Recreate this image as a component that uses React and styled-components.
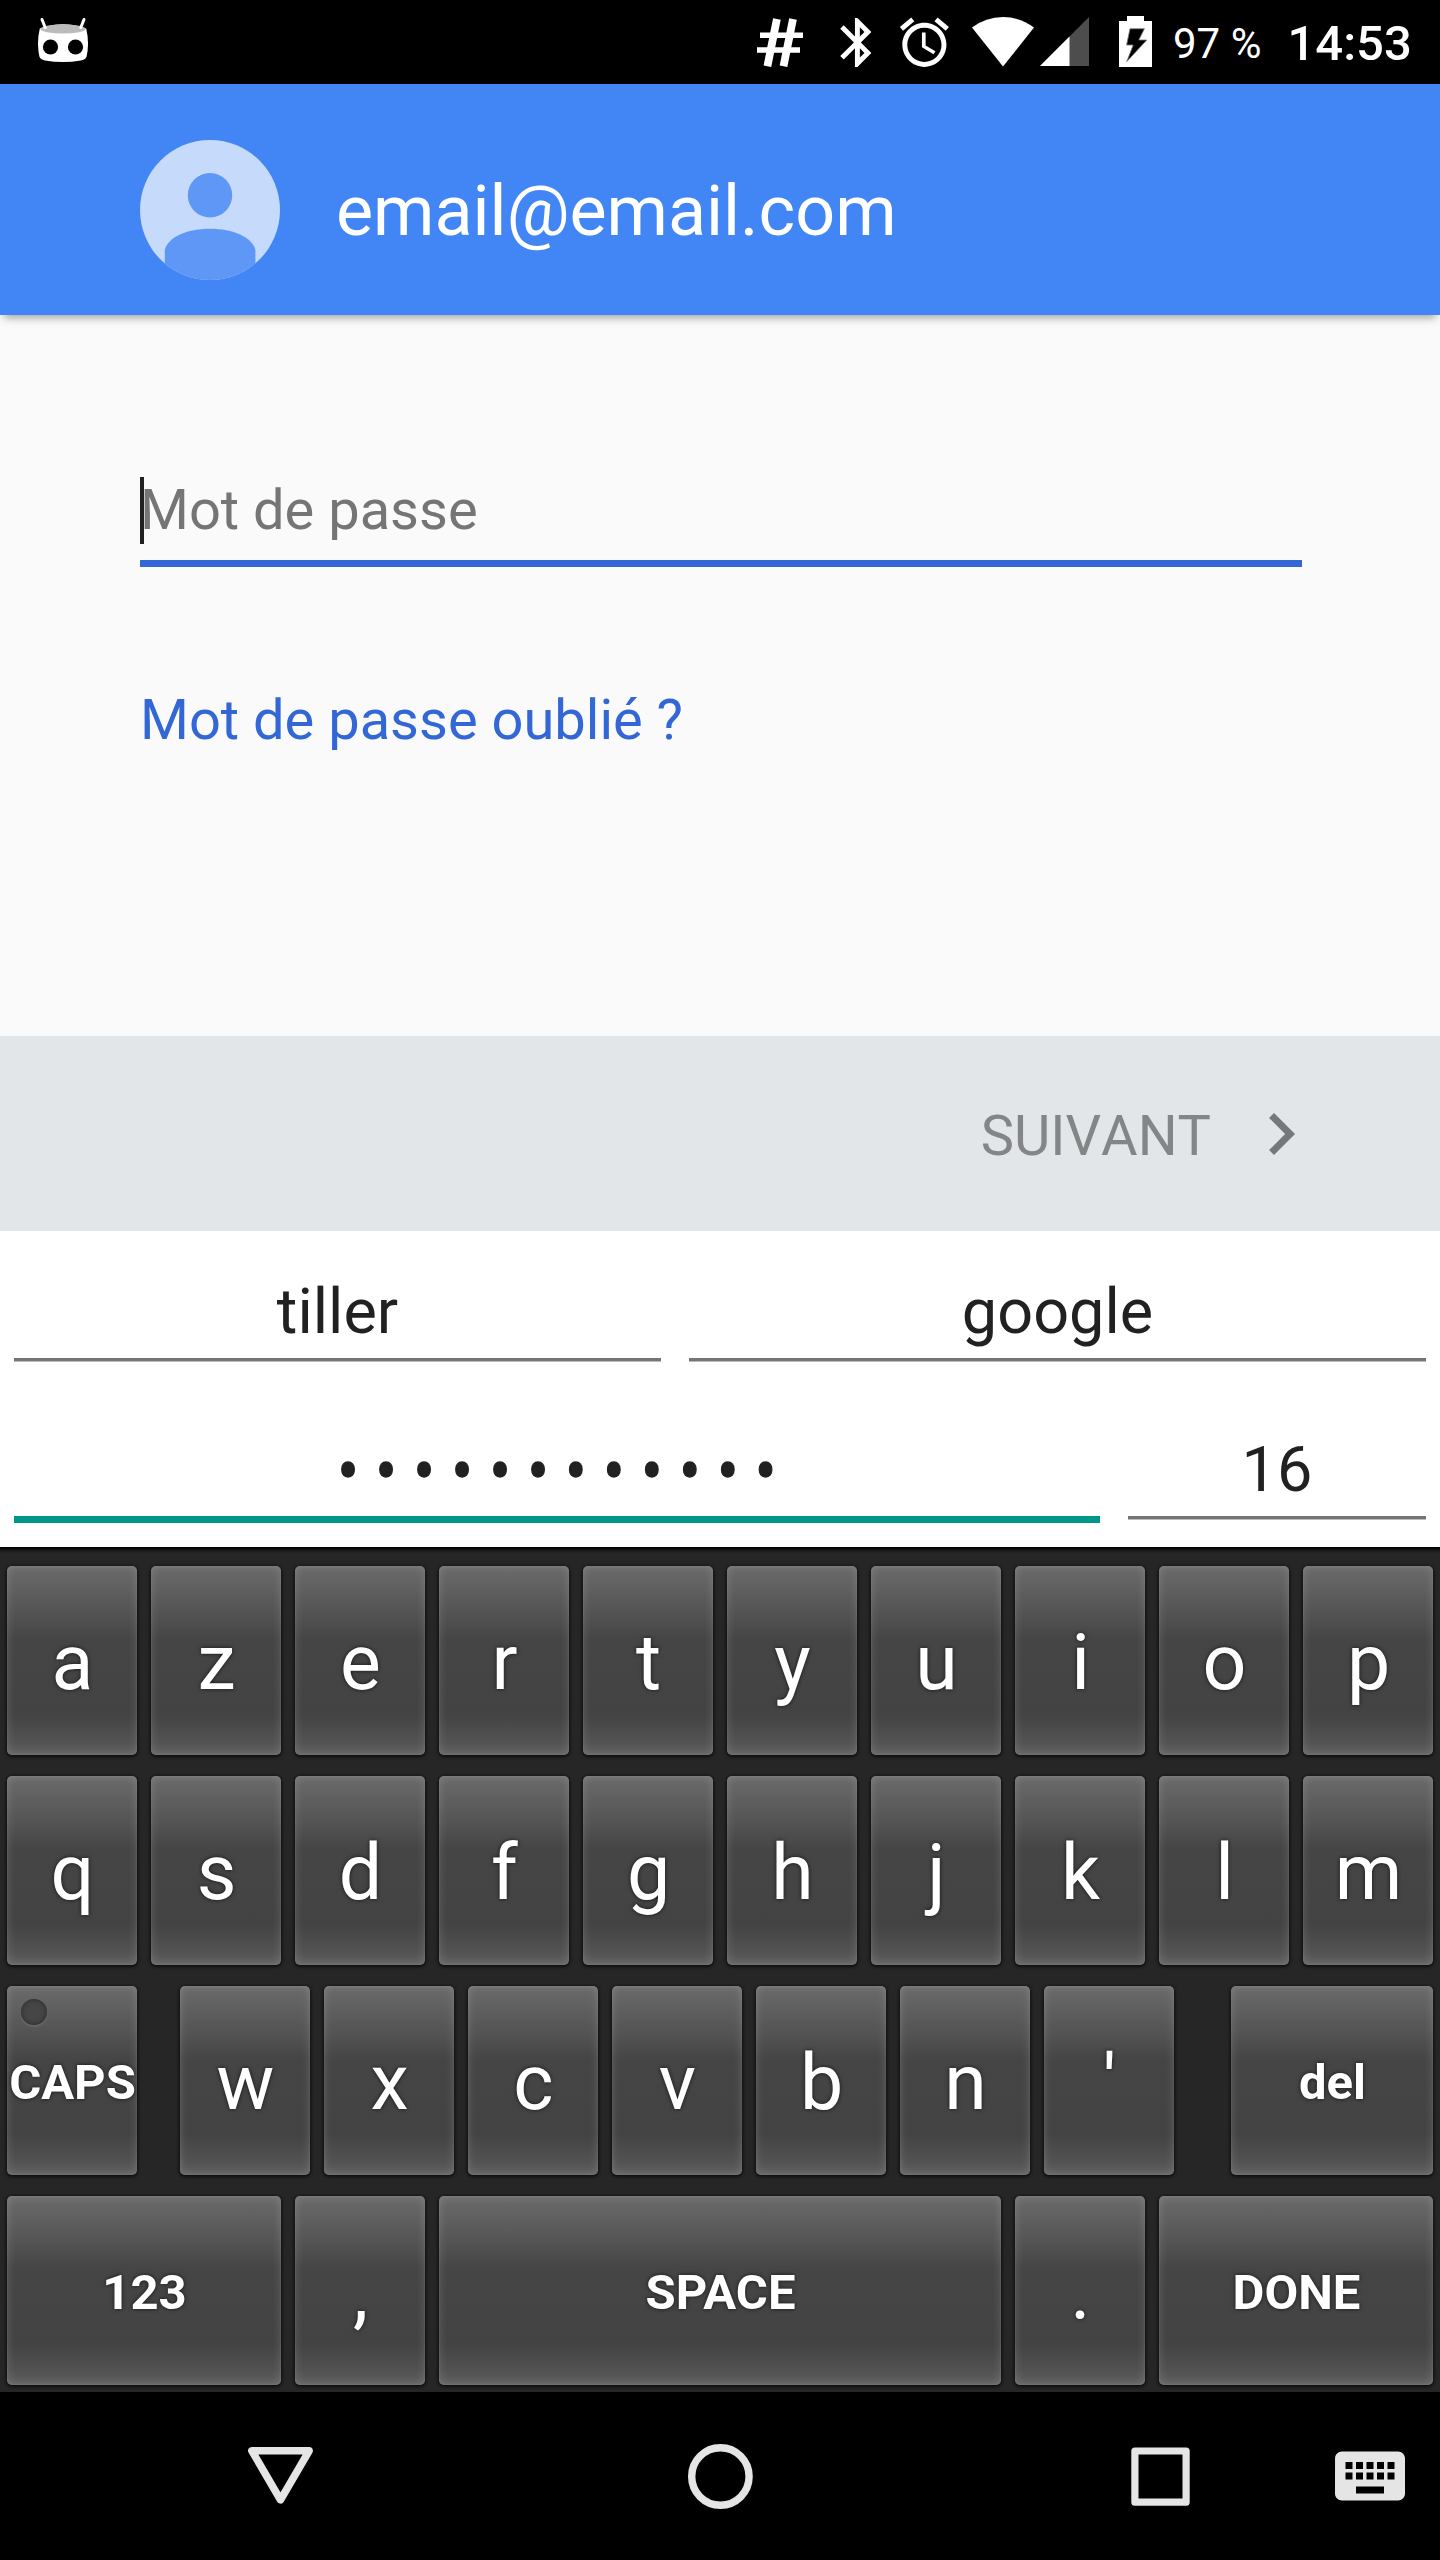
import React from 'react';
import styled, { createGlobalStyle } from 'styled-components';

const GlobalStyle = createGlobalStyle`
  * { box-sizing: border-box; }
  body {
    margin: 0;
    background: #000;
    font-family: Roboto, "Noto Sans", sans-serif;
  }
`;

const Screen = styled.main`
  width: 1440px;
  height: 2560px;
  display: flex;
  flex-direction: column;
  overflow: hidden;
`;

/* ---- status bar ---- */
const StatusBar = styled.header`
  flex: none;
  height: 84px;
  padding: 0 27.5px 0 38px;
  display: flex;
  align-items: center;
  background: #000;
  color: #fff;
  white-space: nowrap;
  svg { flex: none; display: block; }
`;
const StatusIcons = styled.div`
  margin-left: auto;
  height: 84px;
  display: flex;
  align-items: center;
`;
const Slot = styled.span`
  margin-left: ${(p) => p.$gap}px;
`;
const BatteryText = styled.span`
  width: 91px;
  margin-left: 21px;
  font-size: 42px;
  line-height: 84px;
  padding-top: 3px;
`;
const Clock = styled.span`
  width: 125px;
  margin-left: 23.5px;
  font-size: 49px;
  font-weight: 500;
  line-height: 84px;
  padding-top: 4px;
`;

/* ---- account header ---- */
const AccountHeader = styled.section`
  flex: none;
  position: relative;
  height: 231px;
  padding: 56px 140px;
  display: flex;
  gap: 56px;
  background: #4285f4;
  box-shadow: 0 7px 8px -4px rgba(0, 0, 0, 0.34);
`;
const Email = styled.h1`
  margin: 0;
  color: #fff;
  font-size: 70px;
  font-weight: 400;
  line-height: 142px;
`;

/* ---- password form ---- */
const Form = styled.section`
  flex: none;
  height: 721px;
  padding: 145px 138px 0 140px;
  background: #fafafa;
`;
const PasswordField = styled.div`
  height: 107px;
  display: flex;
  align-items: center;
  border-bottom: 7px solid #3367d6;
`;
const Caret = styled.i`
  width: 4px;
  height: 67px;
  margin: 1px -4px 0 0;
  background: #212121;
`;
const Placeholder = styled.span`
  color: #757575;
  font-size: 56px;
  line-height: 100px;
`;
const ForgotLink = styled.a`
  display: block;
  margin-top: 103px;
  color: #3367d6;
  font-size: 56px;
  line-height: 100px;
`;

const ActionBar = styled.footer`
  flex: none;
  height: 195px;
  padding-right: 117px;
  display: flex;
  align-items: center;
  justify-content: flex-end;
  gap: 28px;
  background: #e2e6e9;
`;
const NextLabel = styled.span`
  padding-top: 5px;
  color: #848586;
  font-size: 56px;
  font-kerning: none;
  line-height: 80px;
`;

/* ---- password generator ---- */
const Generator = styled.section`
  flex: none;
  height: 316px;
  padding: 34px 14px 0;
  display: flex;
  flex-direction: column;
  gap: 62px;
  background: #fff;
`;
const GeneratorRow = styled.div`
  height: 96px;
  display: grid;
  grid-template-columns: ${(p) => p.$columns};
  column-gap: 28px;
  align-items: start;
`;
const Entry = styled.div`
  height: ${(p) => (p.$active ? 100 : 96)}px;
  color: #212121;
  font-size: 63px;
  line-height: 93px;
  text-align: center;
  border-bottom: ${(p) => (p.$active ? '7px solid #009688' : '3px solid #757575')};
  box-shadow: 0 1px 0 ${(p) => (p.$active ? 'transparent' : '#bababa')};
`;
const Bullets = styled.span`
  display: inline-block;
  padding-left: 16.7px;
  letter-spacing: 16.7px;
  -webkit-text-stroke: 1.2px #212121;
  transform: translateY(1px) scaleY(1.12);
`;

/* ---- keyboard ---- */
const Keyboard = styled.section`
  flex: none;
  height: 845px;
  padding: 19px 7px 7px;
  display: flex;
  flex-direction: column;
  gap: 21px;
  background: linear-gradient(#000, #141414 3px, #262626 6px);
`;
const KeyRow = styled.div`
  display: flex;
  gap: 14px;
`;
const Key = styled.div`
  position: relative;
  flex: none;
  width: ${(p) => p.$width || 130}px;
  height: 189px;
  margin-left: ${(p) => p.$offset || 0}px;
  padding: ${(p) => (p.$label ? 4 : 6)}px 0 0 1px;
  display: flex;
  align-items: center;
  justify-content: center;
  border-radius: 5px;
  background: linear-gradient(#6a6a6a, #5b5b5b 17%, #454545 39%, #434343 78%, #505050 91%, #5e5e5e);
  box-shadow:
    inset 0 0 9px 1px rgba(255, 255, 255, 0.14),
    inset 0 0 2px rgba(255, 255, 255, 0.16),
    0 1px 3px 1px #0e0e0e;
  color: #fff;
  font-size: ${(p) => (p.$label ? 49 : 77)}px;
  font-weight: ${(p) => (p.$label ? 700 : 400)};
  line-height: 183px;
  text-shadow: 0 0 4px rgba(0, 0, 0, 0.7);
`;
const Led = styled.i`
  position: absolute;
  left: 14px;
  top: 13px;
  width: 26px;
  height: 26px;
  border-radius: 50%;
  background: #464646;
  box-shadow: inset 0 0 4px 1px #303030, 0 2px 2px rgba(255, 255, 255, 0.1);
`;

/* ---- navigation bar ---- */
const NavBar = styled.nav`
  flex: none;
  height: 168px;
  padding-left: 238px;
  display: flex;
  align-items: center;
  background: #000;
  svg { flex: none; display: block; }
`;
const NavButton = styled.span`
  margin-right: ${(p) => p.$gap}px;
`;

const MaterialIcon = ({ d, size, color = '#fff' }) => (
  <svg width={size} height={size} viewBox="0 0 24 24" fill={color}>
    <path d={d} />
  </svg>
);

const BLUETOOTH =
  'M17.71 7.71L12 2h-1v7.59L6.41 5 5 6.41 10.59 12 5 17.59 6.41 19 11 14.41V22h1l5.71-5.71-4.3-4.29 4.3-4.29zM13 5.83l1.88 1.88L13 9.59V5.83zm1.88 10.46L13 18.17v-3.76l1.88 1.88z';
const ALARM =
  'M22 5.72l-4.6-3.86-1.29 1.53 4.6 3.86L22 5.72zM7.88 3.39L6.6 1.86 2 5.71l1.29 1.53 4.59-3.85zM12.5 8H11v6l4.75 2.85.75-1.23-4-2.37V8zM12 4c-4.97 0-9 4.03-9 9s4.02 9 9 9c4.97 0 9-4.03 9-9s-4.03-9-9-9zm0 16c-3.87 0-7-3.13-7-7s3.13-7 7-7 7 3.13 7 7-3.13 7-7 7z';
const CHEVRON = 'M10 6L8.59 7.41 13.17 12l-4.58 4.59L10 18l6-6z';
const KEYBOARD =
  'M20 5H4c-1.1 0-1.99.9-1.99 2L2 17c0 1.1.9 2 2 2h16c1.1 0 2-.9 2-2V7c0-1.1-.9-2-2-2zm-9 3h2v2h-2V8zm0 3h2v2h-2v-2zM8 8h2v2H8V8zm0 3h2v2H8v-2zm-1 2H5v-2h2v2zm0-3H5V8h2v2zm9 7H8v-2h8v2zm0-4h-2v-2h2v2zm0-3h-2V8h2v2zm3 3h-2v-2h2v2zm0-3h-2V8h2v2z';

const CidIcon = () => (
  <svg width="50" height="84" viewBox="0 0 50 84">
    <path
      d="M1.8 28.5Q25 20 48.2 28.5Q51.6 43 48.6 56.5Q48 59.5 43 60.4Q25 63.4 7 60.4Q2 59.5 1.4 56.5Q-1.6 43 1.8 28.5Z"
      fill="#fff"
    />
    <ellipse cx="25" cy="29" rx="22.6" ry="4.6" fill="#bbb" />
    <path d="M4 19.5L7.2 27.5M46 19.5L42.8 27.5" stroke="#fff" strokeWidth="3" strokeLinecap="round" />
    <circle cx="12.5" cy="47" r="7.6" />
    <circle cx="37.5" cy="47" r="7.6" />
  </svg>
);

const HashIcon = () => (
  <svg width="47" height="84" viewBox="0 0 47 84" fill="none" stroke="#fff">
    <path d="M19.9 19L10.4 66.3M36 19L26.5 66.3" strokeWidth="7.8" />
    <path d="M3 35.3H46M0 50H43" strokeWidth="5.6" />
  </svg>
);

const WifiIcon = () => (
  <svg width="62" height="84" viewBox="0 0 62 84">
    <path d="M31 66.5L0 27.5Q14 17 31 17T62 27.5Z" fill="#fff" />
  </svg>
);

const SignalIcon = () => (
  <svg width="49" height="84" viewBox="0 0 49 84">
    <path d="M0 66L49 17V66Z" fill="#4d4d4d" />
    <path d="M0 66L29.5 36.5V66Z" fill="#fff" />
  </svg>
);

const BatteryIcon = () => (
  <svg width="33" height="84" viewBox="0 0 33 84">
    <path d="M8 16H25V21H33V67H0V21H8Z" fill="#fff" />
    <path d="M11 28.8H25.4L19.8 40H27.8L7.8 61.6L14.2 45H7.6Z" stroke="#777" strokeWidth="0.8" />
  </svg>
);

const Avatar = () => (
  <svg width="140" height="140" viewBox="0 0 140 140">
    <clipPath id="avatar-round">
      <circle cx="70" cy="70" r="70" />
    </clipPath>
    <g clipPath="url(#avatar-round)">
      <rect width="140" height="140" fill="#c6dafc" />
      <circle cx="70" cy="55.2" r="22.2" fill="#5e97f6" />
      <path d="M24.8 140V110C28 97 47 88.8 70 88.8S112 97 115.4 110V140Z" fill="#5e97f6" />
    </g>
  </svg>
);

const NavShape = ({ children }) => (
  <svg width="84" height="84" viewBox="0 0 84 84" fill="none" stroke="#e5e5e5" strokeLinejoin="round">
    {children}
  </svg>
);

const letters = (chars) => chars.split('').map((c) => <Key key={c}>{c}</Key>);

export default function App() {
  return (
    <>
      <GlobalStyle />
      <Screen>
        <StatusBar>
          <CidIcon />
          <StatusIcons>
            <Slot $gap={0}><HashIcon /></Slot>
            <Slot $gap={24.4}><MaterialIcon d={BLUETOOTH} size={58.8} /></Slot>
            <Slot $gap={8.4}><MaterialIcon d={ALARM} size={58.8} /></Slot>
            <Slot $gap={17.8}><WifiIcon /></Slot>
            <Slot $gap={6}><SignalIcon /></Slot>
            <Slot $gap={30}><BatteryIcon /></Slot>
            <BatteryText>97 %</BatteryText>
            <Clock>14:53</Clock>
          </StatusIcons>
        </StatusBar>

        <AccountHeader>
          <Avatar />
          <Email>email@email.com</Email>
        </AccountHeader>

        <Form>
          <PasswordField>
            <Caret />
            <Placeholder>Mot de passe</Placeholder>
          </PasswordField>
          <ForgotLink>Mot de passe oublié ?</ForgotLink>
        </Form>

        <ActionBar>
          <NextLabel>SUIVANT</NextLabel>
          <MaterialIcon d={CHEVRON} size={84} color="#757779" />
        </ActionBar>

        <Generator>
          <GeneratorRow $columns="647px 737px">
            <Entry>tiller</Entry>
            <Entry>google</Entry>
          </GeneratorRow>
          <GeneratorRow $columns="1086px 298px">
            <Entry $active><Bullets>••••••••••••</Bullets></Entry>
            <Entry>16</Entry>
          </GeneratorRow>
        </Generator>

        <Keyboard>
          <KeyRow>{letters('azertyuiop')}</KeyRow>
          <KeyRow>{letters('qsdfghjklm')}</KeyRow>
          <KeyRow>
            <Key $label><Led />CAPS</Key>
            <Key $offset={29}>w</Key>
            {letters("xcvbn'")}
            <Key $label $offset={43} $width={202}>del</Key>
          </KeyRow>
          <KeyRow>
            <Key $label $width={274}>123</Key>
            <Key>,</Key>
            <Key $label $width={562}>SPACE</Key>
            <Key>.</Key>
            <Key $label $width={274}>DONE</Key>
          </KeyRow>
        </Keyboard>

        <NavBar>
          <NavButton $gap={356}>
            <NavShape><path d="M13.9 16.8H71.1L42.5 65.8Z" strokeWidth="7.6" /></NavShape>
          </NavButton>
          <NavButton $gap={356}>
            <NavShape><circle cx="42.4" cy="42.5" r="28.7" strokeWidth="7.4" /></NavShape>
          </NavButton>
          <NavButton $gap={126}>
            <NavShape><rect x="16.9" y="17" width="51.2" height="51.2" strokeWidth="7.2" /></NavShape>
          </NavButton>
          <MaterialIcon d={KEYBOARD} size={84} color="#e5e5e5" />
        </NavBar>
      </Screen>
    </>
  );
}
